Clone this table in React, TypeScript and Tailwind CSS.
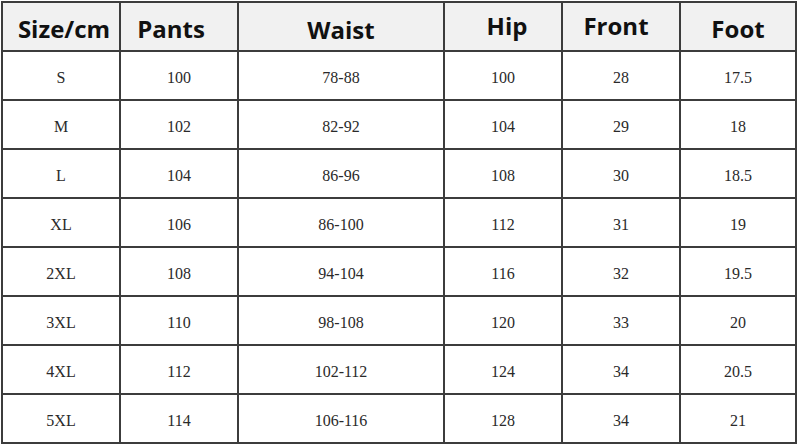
import React from "react";

const headers: { t: string; cls: string }[] = [
  { t: "Size/cm", cls: "pl-[6px] pt-[4px]" },
  { t: "Pants", cls: "pr-[16px] pt-[4px]" },
  { t: "Waist", cls: "pt-[6px]" },
  { t: "Hip", cls: "pl-[8px] pb-[2px]" },
  { t: "Front", cls: "pr-[10px] pb-[2px]" },
  { t: "Foot", cls: "pt-[4px]" },
];

const rows: string[][] = [
  ["S", "100", "78-88", "100", "28", "17.5"],
  ["M", "102", "82-92", "104", "29", "18"],
  ["L", "104", "86-96", "108", "30", "18.5"],
  ["XL", "106", "86-100", "112", "31", "19"],
  ["2XL", "108", "94-104", "116", "32", "19.5"],
  ["3XL", "110", "98-108", "120", "33", "20"],
  ["4XL", "112", "102-112", "124", "34", "20.5"],
  ["5XL", "114", "106-116", "128", "34", "21"],
];

export default function App() {
  return (
    <div className="w-[800px] h-[447px] bg-white overflow-hidden">
      <div className="ml-[1px] mt-[1px] w-[796px] bg-[#3c3c3c] p-[2px] grid grid-cols-[116px_116px_204px_116px_116px_114px] auto-rows-[47px] gap-[2px]">
        {headers.map((h) => (
          <div
            key={h.t}
            className={`bg-[#f1f1f1] flex items-center justify-center text-[24px] font-bold text-[#111] ${h.cls}`}
            style={{ fontFamily: '"Open Sans", "Noto Sans", sans-serif' }}
          >
            {h.t}
          </div>
        ))}
        {rows.map((r, i) =>
          r.map((c, j) => (
            <div
              key={i + "-" + j}
              className="bg-white flex items-center justify-center pt-[4px] text-[16px] text-[#2a2a2a]"
              style={{ fontFamily: '"Liberation Serif", "DejaVu Serif", serif' }}
            >
              {c}
            </div>
          ))
        )}
      </div>
    </div>
  );
}
